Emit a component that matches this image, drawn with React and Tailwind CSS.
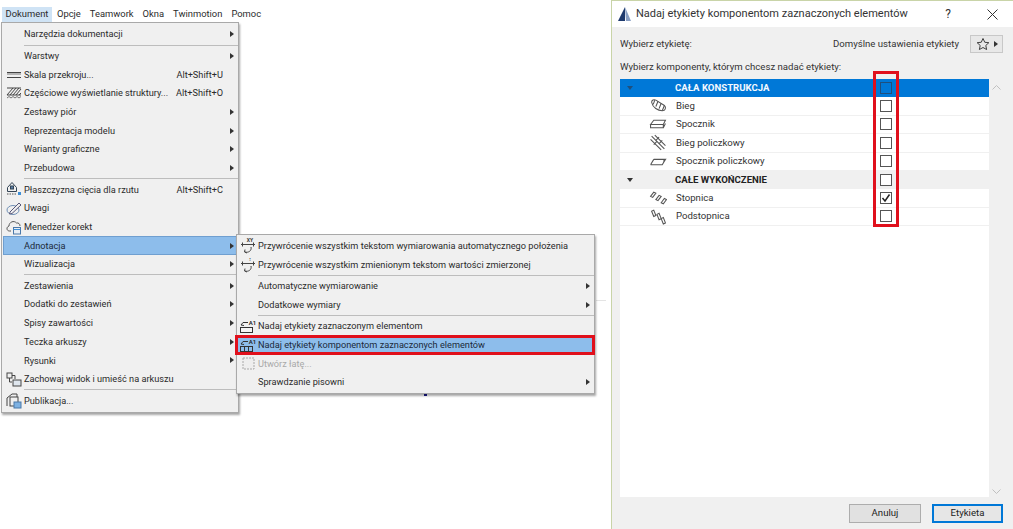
import React from 'react';

const font = { fontFamily: 'Roboto, "Noto Sans", sans-serif' };

function Arrow() {
    return (
        <svg width="4" height="6" viewBox="0 0 4 6" className="shrink-0">
            <path d="M0 0 L4 3 L0 6 Z" fill="#333" />
        </svg>
    );
}

function ScaleIcon() {
    return (
        <svg width="16" height="10" viewBox="0 0 16 10" fill="none" stroke="#444" strokeWidth="1">
            <path d="M1 2.5 H15 M1 7.5 H15" />
            <path d="M2 3 V5 M4 3 V5 M6 3 V5 M8 3 V5 M10 3 V5 M12 3 V5 M14 3 V5" stroke="#777" />
        </svg>
    );
}

function HatchIcon() {
    return (
        <svg width="16" height="12" viewBox="0 0 16 12" fill="none" stroke="#444" strokeWidth="1">
            <path d="M1 1 H15 M1 8 H15" />
            <path d="M1 8 L7 1 M4 8 L10 1 M7 8 L13 1 M10 8 L15 2 M13 8 L15 6" />
            <path d="M1 11 L3 9.5 L5 11 L7 9.5 L9 11 L11 9.5 L13 11 L15 9.5" stroke="#777" />
        </svg>
    );
}

function PlaneIcon() {
    return (
        <svg width="16" height="16" viewBox="0 0 16 16" fill="none" stroke="#345" strokeWidth="1">
            <path d="M1.5 6.5 L6 1.5 L10.5 6.5 V10.5 H1.5 Z" />
            <rect x="4.5" y="5" width="3" height="3" fill="#5a7fa8" />
            <path d="M1 13 H10" stroke="#555" strokeDasharray="1.5 1" />
            <rect x="12" y="11" width="3" height="3" fill="#3f8fd6" stroke="none" />
        </svg>
    );
}

function NotesIcon() {
    return (
        <svg width="16" height="15" viewBox="0 0 16 15" fill="none" stroke="#557" strokeWidth="1">
            <ellipse cx="7" cy="9" rx="6" ry="4.5" stroke="#6f8fb5" />
            <path d="M4 11 L13 2 L15 4 L6 12.5 L3.5 13 Z" fill="#f0f0f0" />
        </svg>
    );
}

function CloudIcon() {
    return (
        <svg width="16" height="16" viewBox="0 0 16 16" fill="none" stroke="#555" strokeWidth="1">
            <path d="M5 12 H3.5 C0.5 12 0 8 3 7 C3 3 8 1 10.5 4 C12.5 3.5 14 5 14 7" />
            <rect x="7.5" y="8.5" width="7" height="6.5" fill="#e8eef5" stroke="#4a78a8" />
            <path d="M7.5 10.5 H14.5" stroke="#3f8fd6" />
        </svg>
    );
}

function SaveViewIcon() {
    return (
        <svg width="16" height="15" viewBox="0 0 16 15" fill="none" stroke="#444" strokeWidth="1">
            <rect x="1" y="1" width="5" height="5" />
            <path d="M6 3.5 H9 V7 M3.5 6 V10 H6" />
            <rect x="7" y="8" width="8" height="6" fill="#dfe6ee" />
        </svg>
    );
}

function PublishIcon() {
    return (
        <svg width="16" height="16" viewBox="0 0 16 16" fill="none" stroke="#444" strokeWidth="1">
            <path d="M1 13 V5 L6 1 H11 V4" />
            <rect x="4" y="4" width="8" height="9" fill="#f0f0f0" />
            <rect x="8" y="9" width="7" height="6" fill="#7db1e2" stroke="#4a78a8" />
        </svg>
    );
}

function ResetIcon({ label }) {
    return (
        <svg width="16" height="16" viewBox="0 0 16 16" fill="none" stroke="#444" strokeWidth="1">
            <path d="M1 6.5 H15 M2.5 4.5 V8.5 M13.5 4.5 V8.5" />
            <path d="M11 9 C12 13 8 15 5 14 M5 11.5 L4.5 14 L7 15" />
            <text x="10" y="4" fontSize="5" fontWeight="700" fill="#333" stroke="none" textAnchor="middle">{label}</text>
        </svg>
    );
}

function LabelIcon({ cells }) {
    return (
        <svg width="18" height="14" viewBox="0 0 18 14" fill="none" stroke="#333" strokeWidth="1">
            <path d="M2 6 L4 3.5 H9 M2 6 L5 6.5" />
            <text x="13.5" y="5.5" fontSize="6" fontWeight="600" fill="#222" stroke="none" textAnchor="middle">A1</text>
            <rect x="1.5" y="8.5" width="12" height="5" fill={cells ? 'none' : '#f5f5f5'} />
            {cells && <path d="M5.5 8.5 V13.5 M9.5 8.5 V13.5" />}
        </svg>
    );
}

function PatchIcon() {
    return (
        <svg width="13" height="13" viewBox="0 0 13 13" fill="#eeeeee" stroke="#a8a8a8" strokeWidth="1" strokeDasharray="2 1">
            <rect x="1" y="1" width="11" height="11" />
        </svg>
    );
}

const mainMenu = [
    { label: 'Narzędzia dokumentacji', arrow: true },
    { sep: true },
    { label: 'Warstwy', arrow: true },
    { label: 'Skala przekroju...', shortcut: 'Alt+Shift+U', icon: <ScaleIcon /> },
    { label: 'Częściowe wyświetlanie struktury...', shortcut: 'Alt+Shift+O', icon: <HatchIcon /> },
    { label: 'Zestawy piór', arrow: true },
    { label: 'Reprezentacja modelu', arrow: true },
    { label: 'Warianty graficzne', arrow: true },
    { label: 'Przebudowa', arrow: true },
    { sep: true },
    { label: 'Płaszczyzna cięcia dla rzutu', shortcut: 'Alt+Shift+C', icon: <PlaneIcon /> },
    { label: 'Uwagi', icon: <NotesIcon /> },
    { label: 'Menedżer korekt', icon: <CloudIcon /> },
    { label: 'Adnotacja', arrow: true, active: true },
    { label: 'Wizualizacja', arrow: true },
    { sep: true },
    { label: 'Zestawienia', arrow: true },
    { label: 'Dodatki do zestawień', arrow: true },
    { label: 'Spisy zawartości', arrow: true },
    { label: 'Teczka arkuszy', arrow: true },
    { label: 'Rysunki', arrow: true },
    { label: 'Zachowaj widok i umieść na arkuszu', icon: <SaveViewIcon /> },
    { sep: true },
    { label: 'Publikacja...', icon: <PublishIcon /> },
];

const subMenu = [
    { label: 'Przywrócenie wszystkim tekstom wymiarowania automatycznego położenia', icon: <ResetIcon label="XY" /> },
    { label: 'Przywrócenie wszystkim zmienionym tekstom wartości zmierzonej', icon: <ResetIcon label="↕" /> },
    { sep: true },
    { label: 'Automatyczne wymiarowanie', arrow: true },
    { label: 'Dodatkowe wymiary', arrow: true },
    { sep: true },
    { label: 'Nadaj etykiety zaznaczonym elementom', icon: <LabelIcon /> },
    { label: 'Nadaj etykiety komponentom zaznaczonych elementów', icon: <LabelIcon cells />, hot: true },
    { label: 'Utwórz łatę...', icon: <PatchIcon />, disabled: true },
    { label: 'Sprawdzanie pisowni', arrow: true },
];

function MenuRows({ items, gutter }) {
    return items.map((item, i) => {
        if (item.sep) {
            return <div key={i} className="h-[2.8px] flex items-center" style={{ paddingLeft: gutter }}><div className="h-px w-full bg-[#bdbdbd]" /></div>;
        }
        let rowClass = 'text-[#2b2b2b]';
        if (item.active) rowClass = 'bg-[#8dbdeb] shadow-[inset_0_0_0_1px_#6f9fd0] text-[#1c2a3a]';
        if (item.hot) rowClass = 'bg-[#8dbdeb] text-[#1c2a3a]';
        if (item.disabled) rowClass = 'text-[#a9a9a9]';
        return (
            <div key={i} className={`relative flex h-[18.7px] items-center pr-[4px] ${rowClass}`}>
                <div className="flex shrink-0 items-center justify-center" style={{ width: gutter }}>{item.icon}</div>
                <span className="flex-1 whitespace-nowrap">{item.label}</span>
                {item.shortcut && <span className="mr-[11px] whitespace-nowrap">{item.shortcut}</span>}
                {item.arrow && <Arrow />}
                {item.hot && <div className="absolute -left-[3px] -right-[1px] -top-[1px] -bottom-[1px] border-[3px] border-[#e0101c]" />}
            </div>
        );
    });
}

function MenuPanel() {
    return (
        <div className="relative w-[611px] shrink-0 text-[9.2px]">
            <div className="flex h-[22px] items-end pl-[2px] text-[9.4px] text-[#2b2b2b]">
                <div className="flex h-[15px] w-[50px] items-center justify-center bg-[#cfe3f5]">Dokument</div>
                <div className="ml-[5px] flex h-[15px] gap-[9px] items-center">
                    <span>Opcje</span>
                    <span>Teamwork</span>
                    <span>Okna</span>
                    <span>Twinmotion</span>
                    <span>Pomoc</span>
                </div>
            </div>
            <div className="ml-[1px] w-[238px] border border-[#a9a9a9] bg-[#f0f0f0] py-[2px] pl-[1px] shadow-[1px_2px_2px_rgba(0,0,0,0.35)]">
                <MenuRows items={mainMenu} gutter="21px" />
            </div>
            {/* bits of the drawing behind the menus */}
            <div className="absolute left-[596px] top-[300px] h-px w-[10px] bg-[#e4e4e4]" />
            <div className="absolute left-[424px] top-[394px] h-[2px] w-[3px] bg-[#1a1a8c]" />
            <div className="absolute left-[236px] top-[234px] w-[359px] border border-[#a9a9a9] bg-[#f0f0f0] py-[1.5px] pl-[1px] shadow-[1px_2px_2px_rgba(0,0,0,0.35)]">
                <MenuRows items={subMenu} gutter="20px" />
            </div>
        </div>
    );
}

function StairIcon({ type }) {
    const paths = {
        flight: <><path d="M2 4 C2 2 4 1 6 2 L14 7 C16 9 15 12 12 12 C8 12 3 9 2 4 Z" /><path d="M5 2 L3.5 6 M8 3 L6 8 M11 5 L9 10 M14 7 L12 12" /></>,
        landing: <><path d="M1 8 L4 4 H15 L13 8 Z" /><path d="M1 8 V11 H13 V8 M13 11 L15 7" /></>,
        stringerFlight: <><path d="M2 2 L14 14 M5 1 L15 11 M1 5 L11 15" /><path d="M6 6 L9 3 M9 9 L12 6 M4 10 L7 7" /></>,
        stringerLanding: <><path d="M4 6 H15 L13 8 M1 11 H12 L15 6 M4 6 L1 11" /></>,
        tread: <><path d="M1 6 L4 2 L6 3 L3 7 Z M6 9 L9 5 L11 6 L8 10 Z M11 12 L14 8 L16 9 L13 13 Z" /></>,
        riser: <><path d="M2 3 L4 2 L6 7 L4 8 Z M7 6 L9 5 L11 10 L9 11 Z M11 10 L13 9 L15 14 L13 15 Z" /></>,
    };
    return <svg width="18" height="17" viewBox="0 0 16 16" fill="none" stroke="#555" strokeWidth="1">{paths[type]}</svg>;
}

const rows = [
    { label: 'CAŁA KONSTRUKCJA', group: true, selected: true },
    { label: 'Bieg', icon: 'flight' },
    { label: 'Spocznik', icon: 'landing' },
    { label: 'Bieg policzkowy', icon: 'stringerFlight' },
    { label: 'Spocznik policzkowy', icon: 'stringerLanding' },
    { label: 'CAŁE WYKOŃCZENIE', group: true },
    { label: 'Stopnica', icon: 'tread', checked: true },
    { label: 'Podstopnica', icon: 'riser' },
];

function ListRow({ row }) {
    let rowClass = 'border-b border-[#f0f0f0] text-[#333]';
    if (row.group) rowClass = 'bg-[#f0f0f0] font-bold text-[#222]';
    if (row.selected) rowClass = 'bg-[#0078d7] font-bold text-[#f4f9ff]';
    return (
        <div className={`flex h-[18.4px] items-center ${rowClass}`}>
            <div className="flex w-[20px] justify-center">
                {row.group && (
                    <svg width="6" height="4" viewBox="0 0 6 4"><path d="M0 0 H6 L3 4 Z" fill={row.selected ? '#1f4f7d' : '#333'} /></svg>
                )}
            </div>
            <div className="flex w-[35px] justify-center">{row.icon && <StairIcon type={row.icon} />}</div>
            <span className={`flex-1 whitespace-nowrap ${row.group ? '' : 'pl-[1px]'}`}>{row.label}</span>
            <div className={`mr-[97px] flex h-[12px] w-[12px] items-center justify-center border ${row.selected ? 'border-[#1f4f7d] bg-[#0078d7]' : 'border-[#555] bg-white'}`}>
                {row.checked && (
                    <svg width="10" height="10" viewBox="0 0 10 10" fill="none" stroke="#222" strokeWidth="1.5"><path d="M1.5 5 L4 8 L8.5 1.5" /></svg>
                )}
            </div>
        </div>
    );
}

function Dialog() {
    return (
        <div className="relative flex h-full w-[402px] shrink-0 flex-col border-l border-t border-[#c9d4a8] text-[9.6px]">
            <div className="flex h-[26px] shrink-0 items-center bg-white pl-[5px] pr-[15px] text-[#333]">
                <svg width="15" height="14" viewBox="0 0 15 14" className="shrink-0">
                    <path d="M1 14 L8 0 V14 Z" fill="#1e3a6e" />
                    <path d="M8 0 L14 14 H9 Z" fill="#8aa0c4" />
                </svg>
                <span className="ml-[4px] flex-1 whitespace-nowrap text-[11px]">Nadaj etykiety komponentom zaznaczonych elementów</span>
                <span className="text-[12px]">?</span>
                <svg width="11" height="11" viewBox="0 0 11 11" fill="none" stroke="#333" strokeWidth="1" className="ml-[36px]"><path d="M0.5 0.5 L10.5 10.5 M10.5 0.5 L0.5 10.5" /></svg>
            </div>
            <div className="flex min-h-0 flex-1 flex-col bg-[#f0f0f0] pl-[8px] pr-[10px] text-[#333]">
                <div className="mt-[8px] flex h-[18px] items-center">
                    <span className="flex-1">Wybierz etykietę:</span>
                    <span>Domyślne ustawienia etykiety</span>
                    <div className="ml-[11px] flex h-[18px] w-[33px] items-center justify-center gap-[4px] border border-[#c8c8c8] bg-[#e8e8e8]">
                        <svg width="14" height="14" viewBox="0 0 24 24" fill="none" stroke="#333" strokeWidth="1.6"><path d="M12 2.5 L15 9 L22 9.8 L16.8 14.5 L18.2 21.5 L12 18 L5.8 21.5 L7.2 14.5 L2 9.8 L9 9 Z" /></svg>
                        <Arrow />
                    </div>
                </div>
                <div className="mt-[8px] h-[12px] leading-[12px]">Wybierz komponenty, którym chcesz nadać etykiety:</div>
                <div className="mt-[6px] flex min-h-0 flex-1">
                    <div className="flex-1 bg-white">
                        {rows.map((row) => <ListRow key={row.label} row={row} />)}
                    </div>
                    <div className="flex w-[14px] flex-col items-center justify-between pb-[3px] pt-[6px]">
                        <svg width="9" height="5" viewBox="0 0 9 5" fill="none" stroke="#c0c0c0" strokeWidth="1"><path d="M0.5 4.5 L4.5 0.5 L8.5 4.5" /></svg>
                        <svg width="9" height="5" viewBox="0 0 9 5" fill="none" stroke="#c0c0c0" strokeWidth="1"><path d="M0.5 0.5 L4.5 4.5 L8.5 0.5" /></svg>
                    </div>
                </div>
                <div className="flex h-[32px] shrink-0 items-start justify-end gap-[11px] pt-[7px]">
                    <button className="h-[19px] w-[72px] border border-[#adadad] bg-[#e1e1e1] text-[9.6px] text-[#222]">Anuluj</button>
                    <button className="h-[19px] w-[71px] border-2 border-[#0078d7] bg-[#e6e6e6] text-[9.6px] text-[#222]">Etykieta</button>
                </div>
            </div>
            <div className="absolute left-[261px] top-[70px] h-[156px] w-[26px] border-[3px] border-[#e0101c]" />
        </div>
    );
}

export default function App() {
    return (
        <div className="flex h-[529px] w-[1013px] overflow-hidden bg-white" style={font}>
            <MenuPanel />
            <Dialog />
        </div>
    );
}
